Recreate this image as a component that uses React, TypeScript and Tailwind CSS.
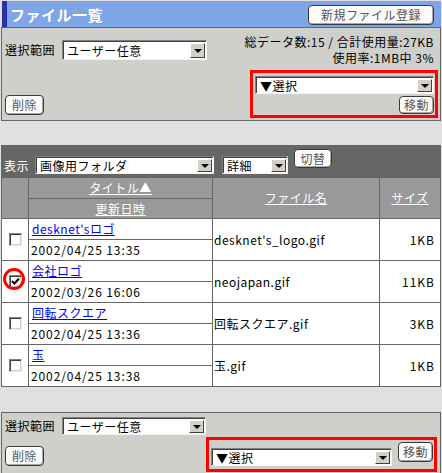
import React from "react";

const FONT = "font-['Noto_Sans_CJK_JP','Noto_Sans',sans-serif]";

function Btn({ children, className = "" }: { children: React.ReactNode; className?: string }) {
  return (
    <div
      className={`flex items-center justify-center rounded-[4px] border border-[#3a3a3a] bg-[#fcfcfc] text-[#555555] text-[12px] leading-none shadow-[inset_-1px_-1px_0_#a8a8a8,inset_1px_1px_0_#ffffff] ${className}`}
    >
      {children}
    </div>
  );
}

function Select({ label, className = "" }: { label: string; className?: string }) {
  return (
    <div
      className={`flex items-center bg-white border border-t-[#808080] border-l-[#808080] border-b-[#f4f4f4] border-r-[#f4f4f4] shadow-[inset_1px_1px_0_#404040] ${className}`}
    >
      <span className="flex-1 pl-[4px] pt-[1px] text-black text-[12px] leading-[14px] whitespace-nowrap">
        {label}
      </span>
      <div className="mr-[1px] mt-[1px] h-[calc(100%-3px)] w-[15px] flex items-center justify-center bg-[#d4d0c8] border border-t-[#ffffff] border-l-[#ffffff] border-b-[#404040] border-r-[#404040]">
        <div className="w-0 h-0 border-l-[4px] border-r-[4px] border-t-[4px] border-l-transparent border-r-transparent border-t-black" />
      </div>
    </div>
  );
}

function Checkbox({ checked = false }: { checked?: boolean }) {
  return (
    <div className="w-[13px] h-[13px] bg-white border border-t-[#808080] border-l-[#808080] border-b-[#e8e8e8] border-r-[#e8e8e8] shadow-[inset_1px_1px_0_#404040,inset_-1px_-1px_0_#d4d0c8] flex items-center justify-center">
      {checked && (
        <svg width="9" height="9" viewBox="0 0 9 9">
          <path d="M1 4 L3.5 6.5 L8 1.5" stroke="#000" strokeWidth="2" fill="none" />
        </svg>
      )}
    </div>
  );
}

const rows = [
  { title: "desknet'sロゴ", date: "2002/04/25 13:35", file: "desknet's_logo.gif", size: "1KB", checked: false },
  { title: "会社ロゴ", date: "2002/03/26 16:06", file: "neojapan.gif", size: "11KB", checked: true },
  { title: "回転スクエア", date: "2002/04/25 13:36", file: "回転スクエア.gif", size: "3KB", checked: false },
  { title: "玉", date: "2002/04/25 13:38", file: "玉.gif", size: "1KB", checked: false },
];

export default function App() {
  return (
    <div className={`w-[442px] h-[473px] overflow-hidden bg-[#e0e0e0] pt-[1px] text-[12px] leading-none tracking-[0.5px] text-black ${FONT}`}>
      {/* Top panel */}
      <div className="ml-[1px] w-[440px]">
        <div className="h-[26px] bg-[#7ea5e5] border-l-[5px] border-[#2a2fa8] ml-[1px] flex items-center justify-between pl-[3px] pr-[7px]">
          <span className="text-white text-[15px] font-bold tracking-[0.5px]">ファイル一覧</span>
          <Btn className="w-[126px] h-[20px] mt-[2px]">新規ファイル登録</Btn>
        </div>
        <div className="h-[94px] bg-[#cfd0cc] border border-[#666666] flex justify-between">
          <div className="pl-[3px] pt-[12px] flex flex-col">
            <div className="flex items-center">
              <span className="w-[57px] whitespace-nowrap">選択範囲</span>
              <Select label="ユーザー任意" className="w-[145px] h-[20px]" />
            </div>
            <Btn className="w-[39px] h-[20px] mt-[35px]">削除</Btn>
          </div>
          <div className="pr-[2px] pt-[6px] flex flex-col items-end">
            <div className="h-[16px] flex items-center mr-[4px] whitespace-nowrap">総データ数:15 / 合計使用量:27KB</div>
            <div className="h-[16px] flex items-center mr-[4px] whitespace-nowrap">使用率:1MB中 3%</div>
            <div className="mt-[4px] w-[188px] h-[48px] border-[3px] border-[#ff0000] pl-[2px] pt-[3px] pr-[1px] flex flex-col">
              <Select label="▼選択" className="w-[179px] h-[18px]" />
              <Btn className="w-[35px] h-[18px] mt-[2px] self-end">移動</Btn>
            </div>
          </div>
        </div>
      </div>

      {/* List section */}
      <div className="ml-[1px] w-[440px] mt-[24px]">
        <div className="h-[33px] bg-[#666666] flex items-start pl-[3px]">
          <span className="text-white mt-[15px] whitespace-nowrap">表示</span>
          <Select label="画像用フォルダ" className="ml-[6px] mt-[11px] w-[179px] h-[18px]" />
          <Select label="詳細" className="ml-[8px] mt-[11px] w-[66px] h-[18px]" />
          <Btn className="ml-[6px] mt-[4px] w-[38px] h-[19px]">切替</Btn>
        </div>
        <div className="border-l border-r border-[#666666]">
          <div className="h-[41px] bg-[#999999] border-b border-[#666666] flex text-white">
            <div className="w-[27px] border-r border-[#666666]" />
            <div className="w-[184px] border-r border-[#666666] flex flex-col">
              <div className="h-[21px] border-b border-[#666666] flex items-center justify-center">
                <span className="underline">タイトル▲</span>
              </div>
              <div className="flex-1 flex items-center justify-center">
                <span className="underline">更新日時</span>
              </div>
            </div>
            <div className="w-[167px] border-r border-[#666666] flex items-center justify-center">
              <span className="underline">ファイル名</span>
            </div>
            <div className="flex-1 flex items-center justify-center">
              <span className="underline">サイズ</span>
            </div>
          </div>
          {rows.map((r) => (
            <div key={r.title} className="h-[42px] bg-white border-b border-[#666666] flex">
              <div className="relative w-[27px] border-r border-[#666666] flex items-center justify-center">
                <Checkbox checked={r.checked} />
                {r.checked && (
                  <div className="absolute left-[1px] top-[7px] w-[22px] h-[22px] rounded-full border-[3px] border-[#ff0000]" />
                )}
              </div>
              <div className="w-[184px] border-r border-[#666666] flex flex-col">
                <div className="h-[21px] border-b border-[#666666] flex items-center pl-[3px]">
                  <span className="text-[#0000ff] underline">{r.title}</span>
                </div>
                <div className="flex-1 flex items-center pl-[2px] tracking-[0.9px]">{r.date}</div>
              </div>
              <div className="w-[167px] border-r border-[#666666] flex items-center pl-[1px]">{r.file}</div>
              <div className="flex-1 flex items-center justify-end pr-[5px] tracking-[1px]">{r.size}</div>
            </div>
          ))}
        </div>
      </div>

      {/* Bottom panel */}
      <div className="ml-[1px] w-[440px] mt-[25px] h-[70px] bg-[#cfd0cc] border-t border-l border-r border-[#666666] flex flex-col">
        <div className="pl-[3px] pt-[4px] flex items-center">
          <span className="w-[57px] whitespace-nowrap">選択範囲</span>
          <Select label="ユーザー任意" className="w-[144px] h-[18px]" />
        </div>
        <div className="mt-[2px] flex items-start pl-[3px]">
          <Btn className="w-[39px] h-[20px] mt-[9px]">削除</Btn>
          <div className="ml-auto mr-[3px] w-[231px] h-[35px] border-[3px] border-[#ff0000] pl-[2px] flex items-start">
            <Select label="▼選択" className="mt-[8px] w-[181px] h-[18px]" />
            <Btn className="ml-[6px] mt-[2px] w-[35px] h-[20px]">移動</Btn>
          </div>
        </div>
      </div>
    </div>
  );
}
